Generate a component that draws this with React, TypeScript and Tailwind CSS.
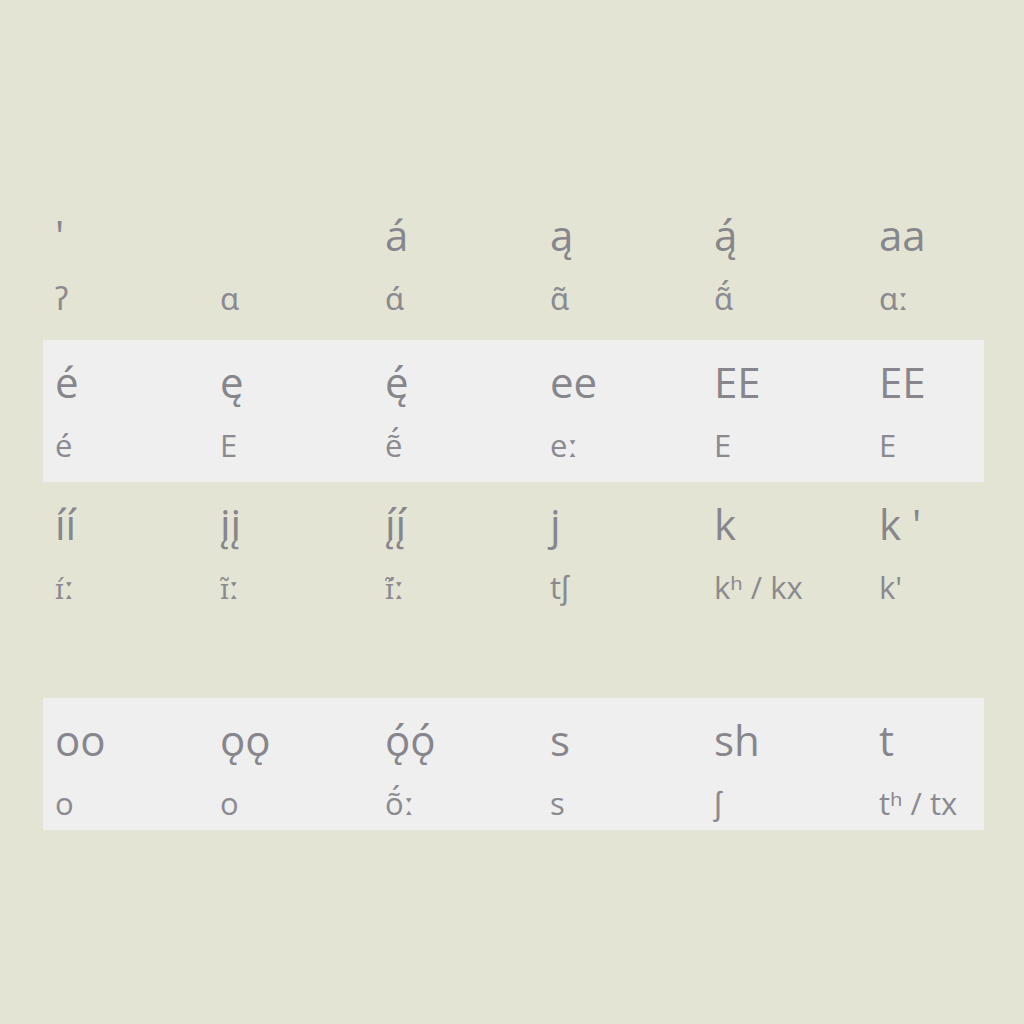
const ROWS: { cells: [string, string][]; band: boolean; h: string }[] = [
  {
    band: false,
    h: "h-[147px]",
    cells: [
      ["'", "ʔ"],
      ["", "ɑ"],
      ["á", "ɑ́"],
      ["ą", "ɑ̃"],
      ["ą́", "ɑ̃́"],
      ["aa", "ɑː"],
    ],
  },
  {
    band: true,
    h: "h-[142px]",
    cells: [
      ["é", "é"],
      ["ę", "E"],
      ["ę́", "ẽ́"],
      ["ee", "eː"],
      ["EE", "E"],
      ["EE", "E"],
    ],
  },
  {
    band: false,
    h: "h-[143px]",
    cells: [
      ["íí", "ɪ́ː"],
      ["įį", "ɪ̃ː"],
      ["į́į́", "ɪ̃́ː"],
      ["j", "tʃ"],
      ["k", "kʰ / kx"],
      ["k '", "k'"],
    ],
  },
];

const LAST: [string, string][] = [
  ["oo", "o"],
  ["ǫǫ", "o"],
  ["ǫ́ǫ́", "ṍː"],
  ["s", "s"],
  ["sh", "ʃ"],
  ["t", "tʰ / tx"],
];

// the small-capital I falls back to a serif face in the original
function Small({ text }: { text: string }) {
  if (!text.startsWith("ɪ")) return <>{text}</>;
  const rest = text.slice(1);
  const marks = rest.replace("ː", "");
  return (
    <>
      <span className="font-['DejaVu_Serif',serif] text-[27px]">{"ɪ" + marks}</span>ː
    </>
  );
}

function Cell({ big, small }: { big: string; small: string }) {
  return (
    <div className="flex flex-col pl-3 pt-[13px]">
      <div className="h-[57px] whitespace-pre text-[42px] leading-[57px] text-[#86868c]">{big}</div>
      <div className="mt-[7px] h-[57px] whitespace-pre text-[31px] leading-[57px] text-[#8a8a90]">
        <Small text={small} />
      </div>
    </div>
  );
}

function Row({ cells, band, h }: { cells: [string, string][]; band: boolean; h: string }) {
  return (
    <div
      className={`grid grid-cols-[165px_165px_165px_164px_165px_1fr] ${h} ${band ? "bg-[#efefef]" : ""}`}
    >
      {cells.map(([big, small], i) => (
        <Cell key={i} big={big} small={small} />
      ))}
    </div>
  );
}

export default function App() {
  return (
    <div className="h-[1024px] w-[1024px] overflow-hidden bg-[#e3e4d3] font-['Open_Sans','Noto_Sans','DejaVu_Sans',sans-serif]">
      <div className="ml-[43px] w-[941px] pt-[193px]">
        {ROWS.map((r, i) => (
          <Row key={i} cells={r.cells} band={r.band} h={r.h} />
        ))}
        <div className="h-[73px]" />
        <Row cells={LAST} band h="h-[132px]" />
      </div>
    </div>
  );
}
